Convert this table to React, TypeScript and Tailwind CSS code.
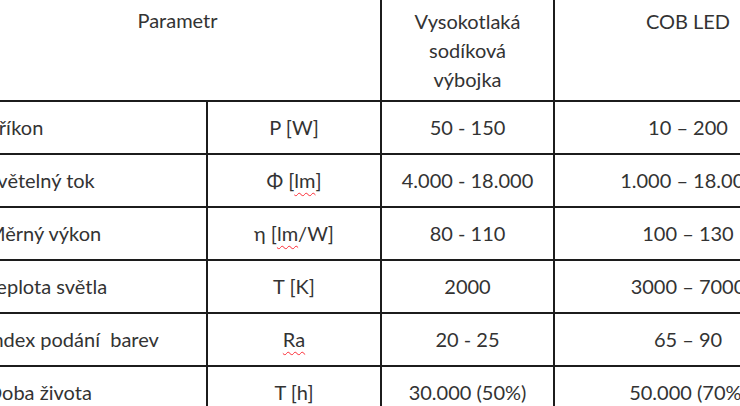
const rows = [
	{ name: "Příkon", unit: <>P [W]</>, hps: "50 - 150", led: "10 – 200" },
	{
		name: "Světelný tok",
		unit: (
			<>
				Φ [<span className="underline decoration-wavy decoration-red-500 decoration-1 underline-offset-4">lm</span>]
			</>
		),
		hps: "4.000 - 18.000",
		led: "1.000 – 18.000",
	},
	{
		name: "Měrný výkon",
		unit: (
			<>
				η [<span className="underline decoration-wavy decoration-red-500 decoration-1 underline-offset-4">lm</span>/W]
			</>
		),
		hps: "80 - 110",
		led: "100 – 130",
	},
	{ name: "Teplota světla", unit: <>T [K]</>, hps: "2000", led: "3000 – 7000" },
	{
		name: "Index podání\u00a0 barev",
		unit: <span className="underline decoration-wavy decoration-red-500 decoration-1 underline-offset-4">Ra</span>,
		hps: "20 - 25",
		led: "65 – 90",
	},
	{ name: "Doba života", unit: <>T [h]</>, hps: "30.000 (50%)", led: "50.000 (70%)" },
];

const App = () => {
	return (
		<div className="w-[740px] h-[406px] overflow-hidden bg-white font-['Lato',sans-serif] text-[20px] text-[#333]">
			<table className="table-fixed border-collapse -ml-[27px] -mt-[2px] w-[848px]">
				<colgroup>
					<col className="w-[233px]" />
					<col className="w-[174px]" />
					<col className="w-[173px]" />
					<col className="w-[268px]" />
				</colgroup>
				<thead>
					<tr className="h-[102px]">
						<th colSpan={2} className="border-2 border-[#1c1c1c] align-top pt-[6px] font-normal leading-[29px]">
							Parametr
						</th>
						<th className="border-2 border-[#1c1c1c] align-top pt-[7px] font-normal leading-[29px]">
							Vysokotlaká
							<br />
							sodíková
							<br />
							výbojka
						</th>
						<th className="border-2 border-[#1c1c1c] align-top pt-[7px] font-normal leading-[29px]">COB LED</th>
					</tr>
				</thead>
				<tbody>
					{rows.map((r) => (
						<tr key={r.name} className="h-[53px]">
							<td className="border-2 border-[#1c1c1c] pl-[12px] pb-[2px] whitespace-nowrap">{r.name}</td>
							<td className="border-2 border-[#1c1c1c] pb-[2px] text-center whitespace-nowrap">{r.unit}</td>
							<td className="border-2 border-[#1c1c1c] pb-[2px] text-center whitespace-nowrap">{r.hps}</td>
							<td className="border-2 border-[#1c1c1c] pb-[2px] text-center whitespace-nowrap">{r.led}</td>
						</tr>
					))}
				</tbody>
			</table>
		</div>
	);
};

export default App;
